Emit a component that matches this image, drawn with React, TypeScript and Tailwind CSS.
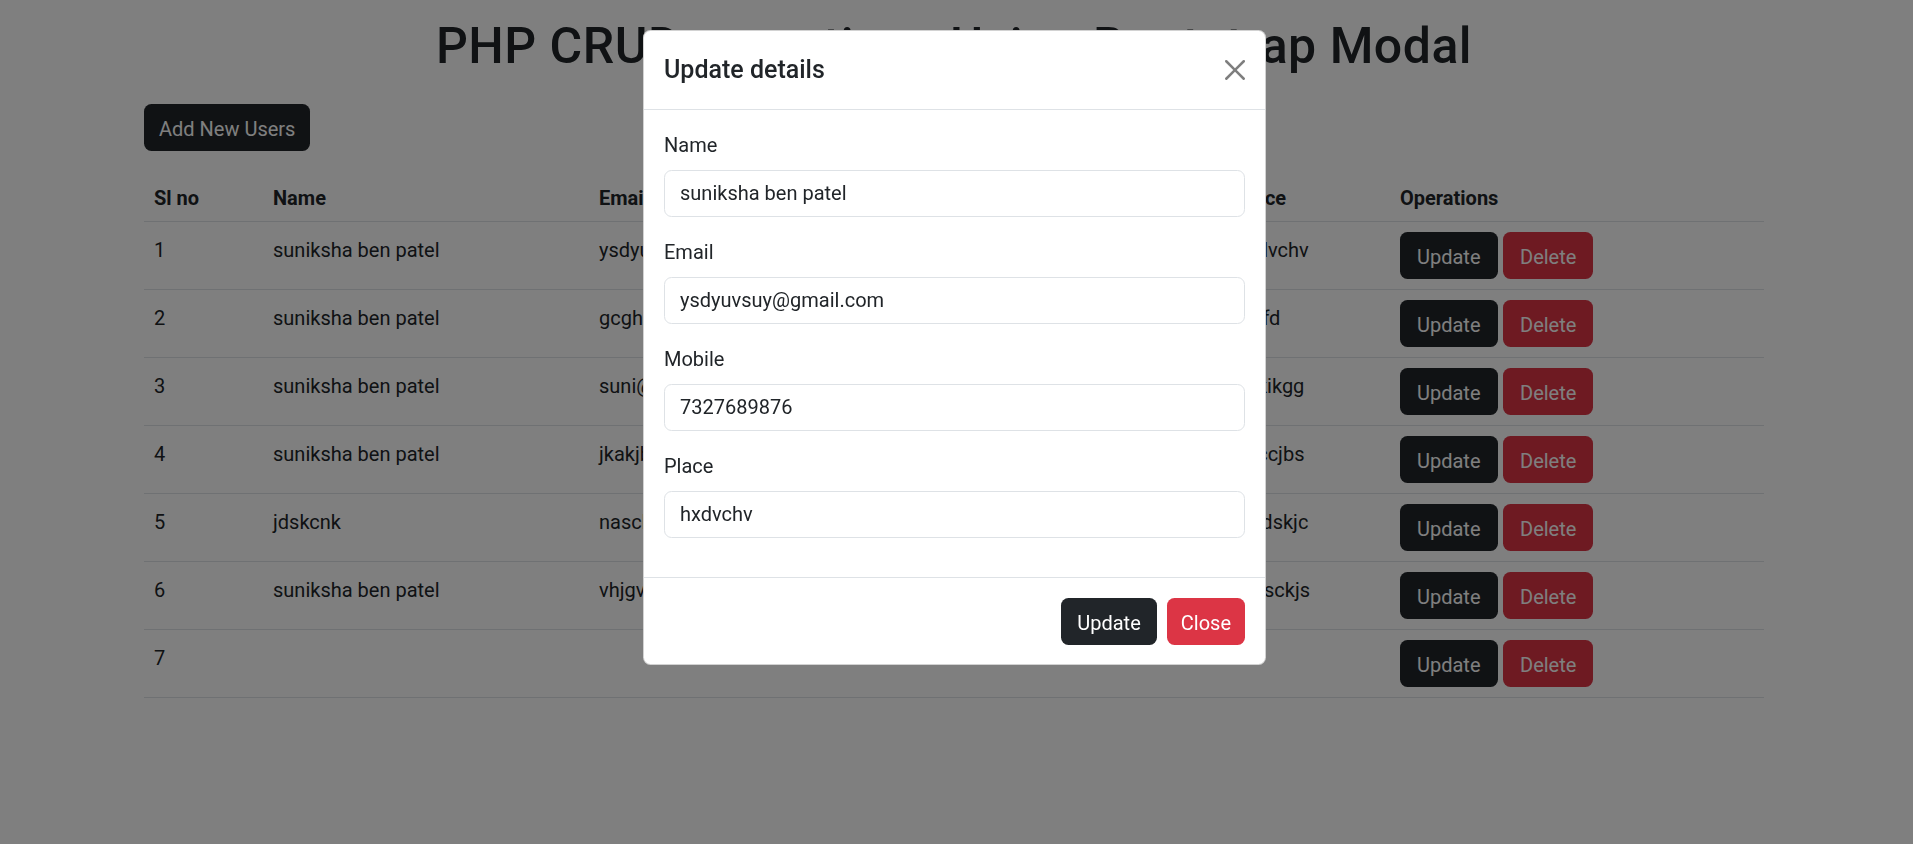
const users = [
  { id: 1, name: "suniksha ben patel", email: "ysdyuvsuy@gmail.com", mobile: "7327689876", place: "hxdvchv" },
  { id: 2, name: "suniksha ben patel", email: "gcghgcgh@gmail.com", mobile: "9876543210", place: "sdjfd" },
  { id: 3, name: "suniksha ben patel", email: "suni@gmail.com", mobile: "8765432190", place: "hxkikgg" },
  { id: 4, name: "suniksha ben patel", email: "jkakjbsjb@gmail.com", mobile: "7654321980", place: "knccjbs" },
  { id: 5, name: "jdskcnk", email: "nasckn@gmail.com", mobile: "6543219870", place: "swdskjc" },
  { id: 6, name: "suniksha ben patel", email: "vhjgvhj@gmail.com", mobile: "9123456780", place: "mcsckjs" },
  { id: 7, name: "", email: "", mobile: "", place: "" },
];

const fields = [
  { label: "Name", value: "suniksha ben patel" },
  { label: "Email", value: "ysdyuvsuy@gmail.com" },
  { label: "Mobile", value: "7327689876" },
  { label: "Place", value: "hxdvchv" },
];

const btn = "h-[47px] pt-[3px] rounded-[7.5px] text-[20px] leading-[30px] text-white";
const cell = "border-b border-[#dee2e6] px-[10px] pt-[13px] pb-[7px] align-top";

const App = () => {
  return (
    <div className="relative min-h-screen bg-white font-[Roboto,'Open_Sans',sans-serif] text-[20px] leading-[30px] text-[#212529]">
      {/* Page */}
      <div className="ml-[144px] w-[1620px]">
        <h1 className="mt-[16px] text-center text-[50px] leading-[60px] font-medium tracking-[0.01em]">
          PHP CRUD operations Using Bootstrap Modal
        </h1>

        <button className={`${btn} mt-[28px] px-[15px] bg-[#212529]`}>Add New Users</button>

        <table className="mt-[20px] w-full table-fixed border-collapse text-left">
          <colgroup>
            <col className="w-[119px]" />
            <col className="w-[326px]" />
            <col className="w-[350px]" />
            <col className="w-[287px]" />
            <col className="w-[164px]" />
            <col className="w-[374px]" />
          </colgroup>
          <thead>
            <tr>
              {["Sl no", "Name", "Email", "Mobile", "Place", "Operations"].map((h) => (
                <th key={h} className="border-b border-[#dee2e6] px-[10px] pt-[12px] pb-[8px] font-bold">
                  {h}
                </th>
              ))}
            </tr>
          </thead>
          <tbody>
            {users.map((u) => (
              <tr key={u.id}>
                <td className={cell}>{u.id}</td>
                <td className={cell}>{u.name}</td>
                <td className={cell}>{u.email}</td>
                <td className={cell}>{u.mobile}</td>
                <td className={cell}>{u.place}</td>
                <td className="border-b border-[#dee2e6] p-[10px] align-top">
                  <div className="flex gap-[5.5px]">
                    <button className={`${btn} px-[17px] bg-[#212529]`}>Update</button>
                    <button className={`${btn} px-[17px] bg-[#dc3545]`}>Delete</button>
                  </div>
                </td>
              </tr>
            ))}
          </tbody>
        </table>
      </div>

      {/* Backdrop */}
      <div className="fixed inset-0 bg-black/50" />

      {/* Modal */}
      <div className="fixed inset-0 flex justify-center pt-[30px] pr-[4px]">
        <div className="h-fit w-[623px] rounded-[7.5px] border border-black/[0.175] bg-white">
          <div className="flex items-center justify-between border-b border-[#dee2e6] p-[20px]">
            <h5 className="text-[25px] leading-[37.5px] font-medium">Update details</h5>
            <button className="flex h-[20px] w-[20px] items-center justify-center opacity-50">
              <svg viewBox="0 0 16 16" className="h-[20px] w-[20px]" fill="#000">
                <path d="M.293.293a1 1 0 0 1 1.414 0L8 6.586 14.293.293a1 1 0 1 1 1.414 1.414L9.414 8l6.293 6.293a1 1 0 0 1-1.414 1.414L8 9.414l-6.293 6.293a1 1 0 0 1-1.414-1.414L6.586 8 .293 1.707a1 1 0 0 1 0-1.414z" />
              </svg>
            </button>
          </div>

          <div className="p-[20px] pb-[19px]">
            {fields.map((f) => (
              <div key={f.label} className="mb-[20px]">
                <label className="mb-[10px] block">{f.label}</label>
                <input
                  readOnly
                  value={f.value}
                  className="block h-[47px] w-full rounded-[7.5px] border border-[#dee2e6] px-[15px] text-[20px] text-[#212529] outline-none"
                />
              </div>
            ))}
          </div>

          <div className="flex justify-end gap-[10px] border-t border-[#dee2e6] px-[20px] pt-[20px] pb-[19px]">
            <button className={`${btn} px-[16px] bg-[#212529]`}>Update</button>
            <button className={`${btn} px-[14px] bg-[#dc3545]`}>Close</button>
          </div>
        </div>
      </div>
    </div>
  );
};

export default App;
